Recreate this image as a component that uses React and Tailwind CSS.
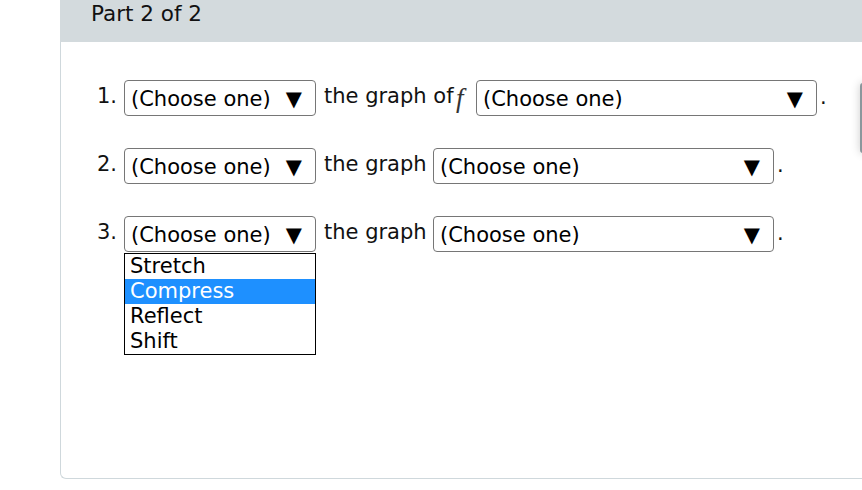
import React from 'react';

const FONT = { fontFamily: '"DejaVu Sans", Verdana, sans-serif' };

function Select({ width, value = '(Choose one)' }) {
    return (
        <div
            className={`flex items-center justify-between h-[36px] border border-[#767676] rounded-[4px] pl-[6px] pr-[13px] pt-[3px] bg-white text-black ${width}`}
        >
            <span>{value}</span>
            <span className="text-[21px] leading-none">▼</span>
        </div>
    );
}

const OPTIONS = ['Stretch', 'Compress', 'Reflect', 'Shift'];

export default function App() {
    return (
        <div className="relative w-[862px] h-[490px] overflow-hidden bg-white text-[21px] text-[#111]" style={FONT}>
            <div className="ml-[60px] w-[830px]">
                {/* header */}
                <div className="h-[42px] bg-[#d3dadd] pl-[31px] pt-[1px] leading-[26px] text-[21.5px] text-[#111]">
                    Part 2 of 2
                </div>

                {/* body */}
                <div className="h-[437px] border-l border-b border-[#cfd8dc] rounded-bl-[6px] pl-[36px] pt-[38px] flex flex-col gap-[32px]">
                    {/* row 1 */}
                    <div className="flex items-center h-[36px]">
                        <span className="mb-[3px] w-[27px]">1.</span>
                        <Select width="w-[192px]" />
                        <span className="mb-[3px] ml-[8px] w-[129px] whitespace-nowrap">the graph of</span>
                        <span
                            className="w-[23px] pl-[3px] italic text-[27px] leading-none text-[#333]"
                            style={{ fontFamily: '"Liberation Serif", "Times New Roman", serif' }}
                        >
                            f
                        </span>
                        <Select width="w-[341px]" />
                        <span className="ml-[3px]">.</span>
                    </div>

                    {/* row 2 */}
                    <div className="flex items-center h-[36px]">
                        <span className="mb-[3px] w-[27px]">2.</span>
                        <Select width="w-[192px]" />
                        <span className="mb-[3px] ml-[8px] w-[109px] whitespace-nowrap">the graph</span>
                        <Select width="w-[341px]" />
                        <span className="ml-[3px]">.</span>
                    </div>

                    {/* row 3 with open list */}
                    <div className="flex items-center h-[36px]">
                        <span className="mb-[3px] w-[27px]">3.</span>
                        <div className="relative">
                            <Select width="w-[192px]" />
                            <div className="absolute left-0 top-[37px] w-[192px] border border-black bg-white text-black leading-[25px] z-10">
                                {OPTIONS.map(opt => (
                                    <div
                                        key={opt}
                                        className={`h-[25px] pl-[5px] ${opt === 'Compress' ? 'bg-[#1e90ff] text-white' : ''}`}
                                    >
                                        {opt}
                                    </div>
                                ))}
                            </div>
                        </div>
                        <span className="mb-[3px] ml-[8px] w-[109px] whitespace-nowrap">the graph</span>
                        <Select width="w-[341px]" />
                        <span className="ml-[3px]">.</span>
                    </div>
                </div>
            </div>

            {/* floating panel edge at right */}
            <div className="absolute left-[860px] top-[83px] w-[30px] h-[70px] bg-[#e9eef0] border-l-2 border-[#8a979c] rounded-l-[3px] shadow-[0_0_10px_rgba(0,0,0,0.2)]" />
        </div>
    );
}
